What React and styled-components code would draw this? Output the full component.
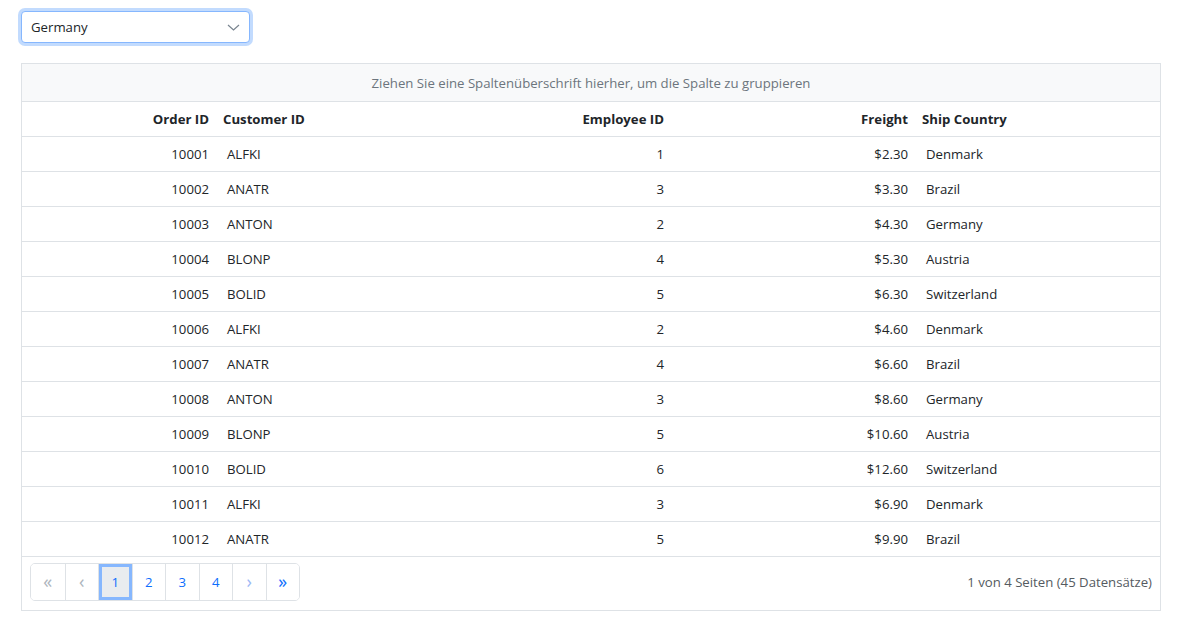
import React, { useState } from 'react';
import styled, { createGlobalStyle } from 'styled-components';

const GlobalStyle = createGlobalStyle`
  body {
    margin: 0;
    background: #fff;
    font-family: 'Open Sans', 'Noto Sans', sans-serif;
    font-size: 13.2px;
    color: #212529;
  }
`;

const orders = [
  [10001, 'ALFKI', 1, '$2.30', 'Denmark'],
  [10002, 'ANATR', 3, '$3.30', 'Brazil'],
  [10003, 'ANTON', 2, '$4.30', 'Germany'],
  [10004, 'BLONP', 4, '$5.30', 'Austria'],
  [10005, 'BOLID', 5, '$6.30', 'Switzerland'],
  [10006, 'ALFKI', 2, '$4.60', 'Denmark'],
  [10007, 'ANATR', 4, '$6.60', 'Brazil'],
  [10008, 'ANTON', 3, '$8.60', 'Germany'],
  [10009, 'BLONP', 5, '$10.60', 'Austria'],
  [10010, 'BOLID', 6, '$12.60', 'Switzerland'],
  [10011, 'ALFKI', 3, '$6.90', 'Denmark'],
  [10012, 'ANATR', 5, '$9.90', 'Brazil'],
];

const columns = [
  { title: 'Order ID', width: 194, align: 'right' },
  { title: 'Customer ID', width: 228, align: 'left' },
  { title: 'Employee ID', width: 227, align: 'right' },
  { title: 'Freight', width: 244, align: 'right' },
  { title: 'Ship Country', width: 245, align: 'left' },
];

export default function App() {
  const [page, setPage] = useState(1);

  return (
    <Page>
      <GlobalStyle />
      <Select>
        <span>Germany</span>
        <svg width="13" height="7" viewBox="0 0 13 7">
          <path d="M1 1 L6.5 6 L12 1" fill="none" stroke="#7a8590" strokeWidth="1.2" />
        </svg>
      </Select>

      <Grid>
        <GroupArea>Ziehen Sie eine Spaltenüberschrift hierher, um die Spalte zu gruppieren</GroupArea>
        <Table>
          <colgroup>
            {columns.map((c) => (
              <col key={c.title} style={{ width: c.width }} />
            ))}
          </colgroup>
          <thead>
            <tr>
              {columns.map((c) => (
                <Th key={c.title} $align={c.align}>{c.title}</Th>
              ))}
            </tr>
          </thead>
          <tbody>
            {orders.map((row) => (
              <tr key={row[0]}>
                {row.map((v, i) => (
                  <Td key={i} $align={columns[i].align}>{v}</Td>
                ))}
              </tr>
            ))}
          </tbody>
        </Table>
        <Footer>
          <Pager>
            <PageBtn $disabled $arrow>«</PageBtn>
            <PageBtn $disabled $arrow>‹</PageBtn>
            {[1, 2, 3, 4].map((n) => (
              <PageBtn key={n} $active={page === n} onClick={() => setPage(n)}>
                {n}
              </PageBtn>
            ))}
            <PageBtn $light $arrow>›</PageBtn>
            <PageBtn $arrow>»</PageBtn>
          </Pager>
          <PageInfo>1 von 4 Seiten (45 Datensätze)</PageInfo>
        </Footer>
      </Grid>
    </Page>
  );
}

const Page = styled.div`
  padding: 11px 21px 12px 21px;
  display: flex;
  flex-direction: column;
  gap: 20px;
`;

const Select = styled.div`
  box-sizing: border-box;
  width: 229px;
  height: 32px;
  display: flex;
  align-items: center;
  justify-content: space-between;
  padding: 0 9px 0 9px;
  border: 1px solid #86b7fe;
  border-radius: 4px;
  box-shadow: 0 0 0 3px rgba(13, 110, 253, 0.25);
  background: #fff;
  color: #212529;
`;

const Grid = styled.div`
  box-sizing: border-box;
  width: 1140px;
  border: 1px solid #dee2e6;
`;

const GroupArea = styled.div`
  height: 37px;
  display: flex;
  align-items: center;
  justify-content: center;
  background: #f8f9fa;
  border-bottom: 1px solid #dee2e6;
  color: #6c757d;
`;

const Table = styled.table`
  width: 100%;
  table-layout: fixed;
  border-collapse: collapse;
`;

const Th = styled.th`
  box-sizing: border-box;
  height: 34px;
  padding: 0 7px;
  text-align: ${(p) => p.$align};
  font-weight: 700;
  font-size: 13.2px;
  color: #212529;
  border-bottom: 1px solid #dee2e6;
`;

const Td = styled.td`
  box-sizing: border-box;
  height: 35px;
  padding: ${(p) => (p.$align === 'left' ? '0 7px 0 11px' : '0 7px')};
  text-align: ${(p) => p.$align};
  font-size: 13.2px;
  color: #212529;
  border-bottom: 1px solid #dee2e6;
`;

const Footer = styled.div`
  box-sizing: border-box;
  height: 53px;
  display: flex;
  align-items: center;
  justify-content: space-between;
  padding: 0 8px 2px 8px;
`;

const Pager = styled.div`
  display: flex;
  border: 1px solid #dee2e6;
  border-radius: 5px;
  overflow: hidden;
`;

const PageBtn = styled.button`
  box-sizing: border-box;
  width: 33.5px;
  height: 36px;
  display: flex;
  align-items: center;
  justify-content: center;
  padding: 0 0 ${(p) => (p.$arrow ? '2px' : '0')} 0;
  font-family: inherit;
  font-size: ${(p) => (p.$arrow ? '18px' : '13.2px')};
  background: ${(p) => (p.$active ? '#e9ecef' : '#fff')};
  border: none;
  border-left: 1px solid #dee2e6;
  box-shadow: ${(p) => (p.$active ? 'inset 0 0 0 3px #86b7fe' : 'none')};
  color: ${(p) => (p.$disabled ? '#adb5bd' : p.$light ? '#9bb8f5' : '#0d6efd')};
  cursor: pointer;
  &:first-child {
    border-left: none;
  }
`;

const PageInfo = styled.div`
  color: #555b61;
`;
